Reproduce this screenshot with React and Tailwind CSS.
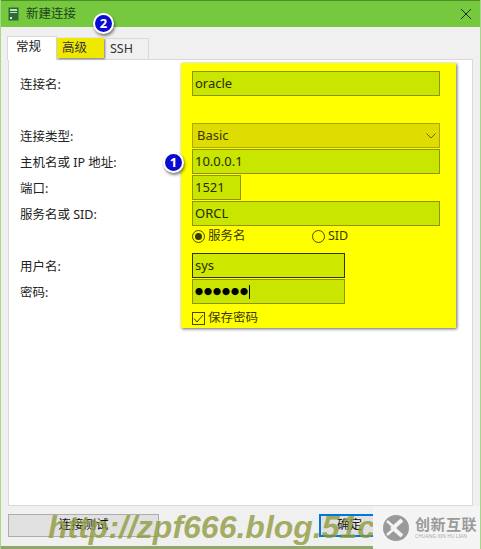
const CJK = { fontFamily: '"Noto Sans", "Noto Sans CJK SC", sans-serif' };

function Field({ className = "", children }) {
  return (
    <div className={`h-[25px] flex items-center px-[2px] text-[13px] text-[#2b2b00] bg-[#c8e600] border border-[#8f9400] ${className}`}>
      {children}
    </div>
  );
}

function Badge({ n, className }) {
  return (
    <div className={`absolute flex size-[21px] items-center justify-center rounded-full bg-[#0a0ad0] border-2 border-white text-[13px] font-bold text-white shadow-[1px_2px_3px_rgba(0,0,0,0.5)] ${className}`}>
      {n}
    </div>
  );
}

function Label({ className = "", children }) {
  return <div className={`h-[26px] flex items-center text-[12.5px] text-[#222] ${className}`}>{children}</div>;
}

export default function App() {
  return (
    <div className="relative w-[481px] h-[549px] overflow-hidden bg-[#f0f0f0] flex flex-col border-x border-[#a5d98a]" style={CJK}>
      {/* title bar */}
      <div className="h-[27px] shrink-0 flex items-center bg-[#76c93f] border-t border-[#4f8f2a] pl-[7px] pr-[7px]">
        <svg width="11" height="14" viewBox="0 0 11 14" className="mr-[7px]">
          <rect x="0.5" y="0.5" width="10" height="13" fill="#2f6b3a" />
          <rect x="2" y="2" width="7" height="2" fill="#b9e6b0" />
          <rect x="2" y="5" width="7" height="1" fill="#b9e6b0" />
          <rect x="2" y="10" width="2" height="2" fill="#d8f0d0" />
        </svg>
        <span className="text-[12.5px] text-[#22421a]">新建连接</span>
        <svg width="12" height="12" viewBox="0 0 12 12" className="ml-auto mr-[1px]" stroke="#1c2c14" strokeWidth="1" fill="none">
          <path d="M1 1l10 10M11 1L1 11" />
        </svg>
      </div>

      {/* tabs */}
      <div className="h-[32px] shrink-0 flex items-end pl-[6px] relative z-10">
        <div className="h-[24px] w-[50px] bg-white border border-b-0 border-[#d9d9d9] pl-[8px] pt-[1px] text-[12.5px] text-[#222] -mb-[1px]">常规</div>
        <div className="h-[20px] w-[47px] mb-[1px] bg-[#f0e800] shadow-[1px_1px_2px_rgba(0,0,0,0.5)] pl-[5px] text-[12.5px] leading-[20px] text-[#333]">高级</div>
        <div className="h-[21px] w-[45px] border border-b-0 border-l-0 border-[#d9d9d9] pl-[6px] text-[12.5px] leading-[20px] text-[#333]">SSH</div>
      </div>

      {/* page */}
      <div className="h-[447px] shrink-0 ml-[7px] mr-[7px] bg-white border border-[#d9d9d9] flex pl-[11px] pt-[3px]">
        <div className="w-[161px] shrink-0 pt-[9px]">
          <Label>连接名:</Label>
          <div className="h-[26px]" />
          <Label>连接类型:</Label>
          <Label>主机名或 IP 地址:</Label>
          <Label>端口:</Label>
          <Label>服务名或 SID:</Label>
          <div className="h-[26px]" />
          <Label>用户名:</Label>
          <Label>密码:</Label>
        </div>
        <div className="w-[275px] h-[265px] bg-[#ffff00] shadow-[1px_1px_3px_rgba(0,0,0,0.6)] pl-[11px] pr-[16px] pt-[8px] flex flex-col">
          <Field>oracle</Field>
          <div className="h-[27px] shrink-0" />
          <div className="h-[25px] flex items-center justify-between pl-[4px] pr-[3px] text-[13px] text-[#3a3a00] bg-[#dedc00] border border-[#a8a800]">
            Basic
            <svg width="10" height="6" viewBox="0 0 10 6" fill="none" stroke="#6a6a00"><path d="M0.5 0.5L5 5l4.5-4.5" /></svg>
          </div>
          <Field className="mt-[1px]">10.0.0.1</Field>
          <Field className="mt-[1px] w-[49px]">1521</Field>
          <Field className="mt-[1px]">ORCL</Field>
          <div className="flex items-center h-[14px] mt-[3px] text-[12.5px] text-[#3a3a00]">
            <span className="size-[13px] rounded-full border border-[#4a4a00] flex items-center justify-center mr-[3px]">
              <span className="size-[7px] rounded-full bg-[#3a3a00]" />
            </span>
            <span className="w-[104px]">服务名</span>
            <span className="size-[13px] rounded-full border border-[#4a4a00] mr-[3px]" />
            SID
          </div>
          <Field className="mt-[10px] w-[153px] bg-[#cfe800] border-[#33330a]">sys</Field>
          <Field className="mt-[1px] w-[153px] border-[#2f7d1f]">
            <span className="text-[8px] tracking-[1px] text-black">●●●●●●</span>
            <span className="w-px h-[14px] bg-black" />
          </Field>
          <div className="flex items-center h-[14px] mt-[7px] text-[12.5px] text-[#3a3a00]">
            <span className="size-[13px] border border-[#4a4a00] flex items-center justify-center mr-[3px]">
              <svg width="11" height="9" viewBox="0 0 11 9" fill="none" stroke="#3a3a00"><path d="M1 4.5L4 8l6-7" /></svg>
            </span>
            保存密码
          </div>
        </div>
      </div>

      {/* buttons */}
      <div className="h-[23px] shrink-0 mt-[8px] ml-[7px] mr-[7px] flex justify-between text-[12.5px] text-[#111]">
        <div className="w-[151px] bg-[#e1e1e1] border border-[#adadad] flex items-center justify-center">连接测试</div>
        <div className="w-[61px] mr-[93px] bg-[#e1e1e1] border-2 border-[#0078d7] flex items-center justify-center">确定</div>
      </div>

      <Badge n="1" className="left-[162px] top-[152px]" />
      <Badge n="2" className="left-[92px] top-[13px]" />

      {/* watermark */}
      <div className="absolute left-[47px] top-[505px] text-[32px] leading-[44px] font-bold italic whitespace-nowrap text-[#8f9a3c]/80" style={{ fontFamily: '"Liberation Sans", sans-serif' }}>
        http://zpf666.blog.51cto.com
      </div>
      <div className="absolute left-0 top-[546px] w-[372px] h-[3px] bg-[#8fa868]" />

      {/* logo */}
      <div className="absolute left-[372px] top-[506px] w-[109px] h-[43px] bg-[#f4f4f4] flex items-center pl-[8px]">
        <svg width="30" height="30" viewBox="0 0 30 30" className="mr-[4px]">
          <circle cx="15" cy="15" r="13" fill="#9a9a9a" />
          <path d="M21 7 L12 15 L21 23" fill="none" stroke="#f4f4f4" strokeWidth="4" />
          <path d="M6 8 L14 15 L6 22" fill="none" stroke="#f4f4f4" strokeWidth="2.5" />
        </svg>
        <div className="flex flex-col leading-none">
          <span className="text-[15px] font-bold text-[#9a9a9a] tracking-[0.5px]">创新互联</span>
          <span className="text-[5px] mt-[2px] text-[#aaaaaa] whitespace-nowrap">CHUANG XIN HU LIAN</span>
        </div>
      </div>
    </div>
  );
}
